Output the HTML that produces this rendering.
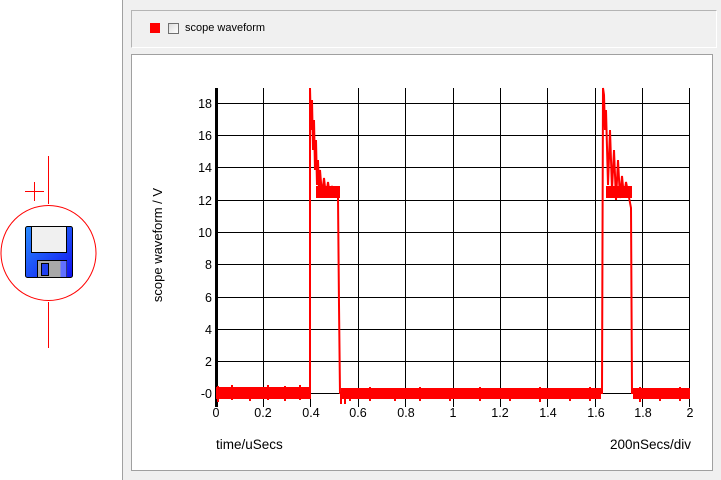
<!DOCTYPE html>
<html><head><style>
body{margin:0;width:721px;height:480px;overflow:hidden;background:#fff;font-family:"Liberation Sans",sans-serif;position:relative}
.panel{position:absolute;left:122px;top:0;width:599px;height:480px;background:#f0f0f0;border-left:1px solid #a0a0a0;box-sizing:border-box}
.grp{position:absolute;left:131px;top:10px;width:586px;height:38px;border:1px solid #b4b4b4;border-right-color:#fff;border-bottom-color:#fff;box-sizing:border-box}
.plot{position:absolute;left:131px;top:54px;width:582px;height:417px;background:#fff;border:1px solid #a0a0a0;box-sizing:border-box}
</style></head><body>
<svg width="122" height="480" style="position:absolute;left:0;top:0">
<g stroke="#f00" stroke-width="1" fill="none">
<line x1="48.5" y1="156" x2="48.5" y2="204"/><line x1="48.5" y1="302" x2="48.5" y2="348"/>
<line x1="25" y1="191.5" x2="44" y2="191.5"/><line x1="34.5" y1="182" x2="34.5" y2="201"/>
<circle cx="48.5" cy="253" r="47.5"/></g>
<defs><linearGradient id="g" x1="0" y1="0" x2="1" y2="1"><stop offset="0" stop-color="#2a8cff"/><stop offset="1" stop-color="#1010f0"/></linearGradient></defs>
<rect x="25.5" y="226.5" width="47" height="51" rx="2" fill="url(#g)" stroke="#000"/>
<rect x="31.5" y="226.5" width="35" height="26" fill="#f0f0f0" stroke="#000"/>
<rect x="37.5" y="260.5" width="29" height="17" fill="#a8a8a8" stroke="#000"/>
<rect x="41.5" y="263.5" width="7" height="12" fill="#2040f0" stroke="#000"/>
<rect x="60.5" y="261" width="6" height="16" fill="#6070ff"/>
</svg>
<div class="panel"></div>
<div class="grp"></div>
<div style="position:absolute;left:150px;top:23px;width:10px;height:10px;background:#f00"></div>
<div style="position:absolute;left:168px;top:23px;width:11px;height:11px;border:1px solid #707070;background:linear-gradient(135deg,#dcdcdc,#fff);box-sizing:border-box"></div>
<div style="position:absolute;left:185px;top:22px;font-size:11px;color:#000">scope waveform</div>
<div class="plot"></div>
<svg width="721" height="480" style="position:absolute;left:0;top:0" font-family="Liberation Sans" font-size="12.5">
<g stroke="#000" stroke-width="1">
<line x1="216" y1="103.5" x2="690" y2="103.5"/><line x1="216" y1="135.5" x2="690" y2="135.5"/><line x1="216" y1="167.5" x2="690" y2="167.5"/><line x1="216" y1="200.5" x2="690" y2="200.5"/><line x1="216" y1="232.5" x2="690" y2="232.5"/><line x1="216" y1="264.5" x2="690" y2="264.5"/><line x1="216" y1="297.5" x2="690" y2="297.5"/><line x1="216" y1="329.5" x2="690" y2="329.5"/><line x1="216" y1="361.5" x2="690" y2="361.5"/><line x1="216" y1="393.5" x2="690" y2="393.5"/>
<line x1="263.5" y1="88" x2="263.5" y2="407"/><line x1="310.5" y1="88" x2="310.5" y2="407"/><line x1="358.5" y1="88" x2="358.5" y2="407"/><line x1="405.5" y1="88" x2="405.5" y2="407"/><line x1="453.5" y1="88" x2="453.5" y2="407"/><line x1="500.5" y1="88" x2="500.5" y2="407"/><line x1="547.5" y1="88" x2="547.5" y2="407"/><line x1="595.5" y1="88" x2="595.5" y2="407"/><line x1="642.5" y1="88" x2="642.5" y2="407"/><line x1="689.5" y1="88" x2="689.5" y2="407"/>
<line x1="216.5" y1="88" x2="216.5" y2="407" stroke-width="3"/>
</g>
<g fill="#f00" stroke="#f00">
<rect x="216" y="387" width="95" height="12" stroke="none"/>
<rect x="341" y="388" width="260" height="11" stroke="none"/>
<rect x="633" y="388" width="57" height="11" stroke="none"/>
<path d="M218 386v16M232 385v15M250 387v14M268 385v15M285 386v15M300 385v15M350 388v13M370 387v14M395 389v12M420 387v14M450 388v13M480 387v14M510 388v13M540 387v15M570 388v13M590 387v14M640 387v15M660 388v13M680 387v14M341 392v12M345 389v15" stroke-width="2" fill="none"/>
<path d="M310 394V88L311 130 312 100 313 150 314 120 315 170 316 140 317 185 318 160 319 190 320 170 322 195 324 178 326 196 328 182 330 196 332 186 334 195 338 192 V198 L339 305 340 394 M632 394 L631 208 628 192 626 182 624 197 622 176 620 198 618 160 616 200 614 150 612 190 610 130 608 185 606 110 605 130 604 95 603 88 602 394" stroke-width="2" fill="none"/>
<rect x="316" y="186" width="24" height="12" stroke="none"/>
<rect x="606" y="186" width="26" height="12" stroke="none"/>
</g>
<g fill="#000" text-anchor="end">
<text x="212" y="108">18</text><text x="212" y="140">16</text><text x="212" y="172">14</text><text x="212" y="205">12</text><text x="212" y="237">10</text><text x="212" y="269">8</text><text x="212" y="302">6</text><text x="212" y="334">4</text><text x="212" y="366">2</text><text x="212" y="398">-0</text>
</g>
<g fill="#000" text-anchor="middle">
<text x="216" y="417">0</text><text x="263" y="417">0.2</text><text x="311" y="417">0.4</text><text x="358" y="417">0.6</text><text x="406" y="417">0.8</text><text x="453" y="417">1</text><text x="500" y="417">1.2</text><text x="548" y="417">1.4</text><text x="596" y="417">1.6</text><text x="643" y="417">1.8</text><text x="690" y="417">2</text>
</g>
<text x="216" y="449" font-size="13.5">time/uSecs</text>
<text x="691" y="449" text-anchor="end" font-size="13.5">200nSecs/div</text>
<text transform="translate(162,245) rotate(-90)" text-anchor="middle" font-size="13">scope waveform / V</text>
</svg>
</body></html>
